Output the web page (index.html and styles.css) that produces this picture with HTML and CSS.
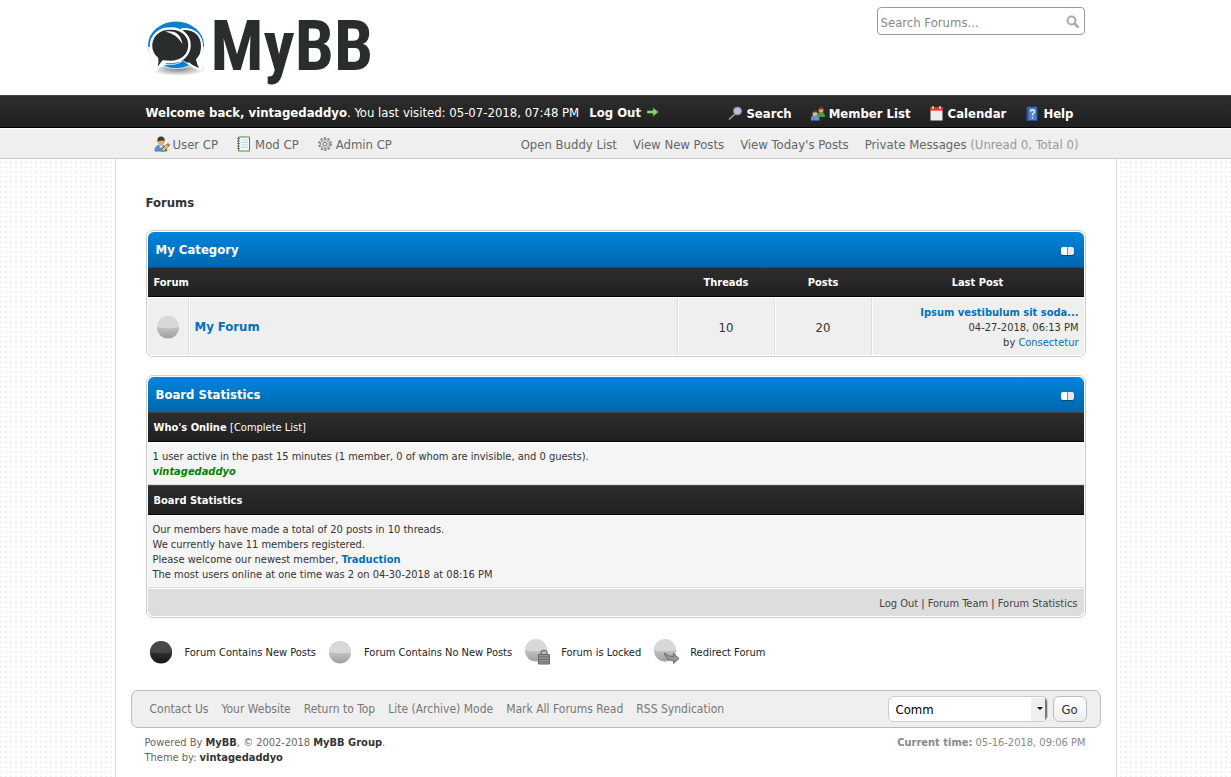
FILE: index.html
```html
<!DOCTYPE html>
<html lang="en">
<head>
<meta charset="utf-8">
<title>Forums</title>
<link rel="stylesheet" href="styles.css">
</head>
<body>
<svg width="0" height="0" class="defs" aria-hidden="true">
  <defs>
    <linearGradient id="gLight" x1="0" y1="0" x2="0" y2="1"><stop offset="0.4" stop-color="#c8c8c8"/><stop offset="1" stop-color="#a0a0a0"/></linearGradient>
    <linearGradient id="gDark" x1="0" y1="0" x2="0" y2="1"><stop offset="0.4" stop-color="#333"/><stop offset="1" stop-color="#161616"/></linearGradient>
    <symbol id="ballOff" viewBox="0 0 22 23"><circle cx="11" cy="11.5" r="11" fill="url(#gLight)"/><path d="M0 11A11 11 0 0 1 22 11Q11 13.500 0 11Z" fill="#d8d8d8"/></symbol>
    <symbol id="ballOn" viewBox="0 0 22 23"><circle cx="11" cy="11.5" r="11" fill="url(#gDark)"/><path d="M0 11A11 11 0 0 1 22 11Q11 13.500 0 11Z" fill="#484848"/></symbol>
  </defs>
</svg>
<header class="top">
  <div class="wrap top-row">
    <a class="logo" href="#" aria-label="MyBB">
      <svg class="logo-mark" width="60" height="60" viewBox="0 0 60 60" aria-hidden="true">
        <defs><radialGradient id="gSh"><stop offset="0" stop-color="#000" stop-opacity=".5"/><stop offset="1" stop-color="#000" stop-opacity="0"/></radialGradient></defs>
        <ellipse cx="30" cy="49" rx="28" ry="7" fill="url(#gSh)"/>
        <ellipse cx="28" cy="25" rx="28" ry="23.500" fill="#0b7fd0"/>
        <path d="M0 27Q1 36 8 42L4 51L16 46L20 40L10 28ZM56 27Q55 36 49 40L54 50L44 46L40 38L50 26Z" fill="#fff"/>
        <path d="M34 9C47 8 54 16 54 26C54 33 52 37 49 39.500Q50 45 53 49.500Q46 48 41 43.500L32 44Z" fill="#2a2d2d" stroke="#fff" stroke-width="2" stroke-linejoin="round"/>
        <path d="M22 8.500C34 8 41.500 16 41.500 25C41.500 35 34 42 22 42Q19 42 15 41.500Q12 47 6 51Q10 45 9 38.500C5 35 3 31 3 26C3 15.500 11 8.500 22 8.500Z" fill="#2a2d2d" stroke="#fff" stroke-width="2.500" stroke-linejoin="round"/>
        <path d="M17 44.500Q29 45.500 35 40.500L42 45.500Q28 51.500 17 46.500Z" fill="#0b7fd0" stroke="#fff" stroke-width=".8"/>
        <path d="M17 11.500Q32 9 34.500 24Q29 14 17 11.500Z" fill="#fff"/>
      </svg>
      <span class="logo-text">MyBB</span>
    </a>
    <form class="search">
      <input type="text" aria-label="Search Forums" placeholder="Search Forums...">
      <button type="button" aria-label="Search"><svg width="14" height="14" viewBox="0 0 14 14"><circle cx="5.500" cy="5.500" r="4" fill="none" stroke="#aaa" stroke-width="2"/><path d="M8.500 8.500L12.500 12.500" stroke="#aaa" stroke-width="2.500"/></svg></button>
    </form>
  </div>
</header>
<div class="upper">
  <div class="wrap upper-row">
    <div class="welcome"><span><strong>Welcome back, <a href="#">vintagedaddyo</a></strong>. You last visited: 05-07-2018, 07:48 PM</span>
      <a class="logout" href="#">Log Out <svg width="14" height="10" viewBox="-2 0 14 10"><path d="M0 3.500H6V0.500L11.500 5L6 9.500V6.500H0Z" fill="#8fcf7a" stroke="#2c6b23" stroke-width=".8"/></svg></a></div>
    <nav class="main-nav">
      <a href="#"><svg width="16" height="16" viewBox="0 0 16 16"><path d="M2 13.500L8 8" stroke="#aaa" stroke-width="1.500"/><circle cx="10.500" cy="5" r="4" fill="#b4c2d6" stroke="#7d8794"/></svg>Search</a>
      <a href="#"><svg width="16" height="16" viewBox="0 0 16 16"><path d="M7 11Q7 6 11 6Q15 6 15 11Z" fill="#4a9d3f"/><circle cx="11" cy="4" r="2.500" fill="#e0ad79"/><path d="M8.500 4Q8 1 11 1Q14 1 13.500 4Q12 2.500 8.500 4Z" fill="#80381e"/><path d="M1 14.500Q0 9 5 9Q10 9 9.500 14.500Z" fill="#5d94dd"/><circle cx="5" cy="7.500" r="2.500" fill="#e7b67c"/><path d="M2.500 7Q2 4 5 4Q8 4 7.500 7Q6 5.500 2.500 7Z" fill="#593b20"/></svg>Member List</a>
      <a href="#"><svg width="16" height="16" viewBox="0 0 16 16"><path d="M1.500 5H13.500V14.500H1.500Z" fill="#e9eeed"/><path d="M1 1H14V5H1Z" fill="#dc3434"/><path d="M4 0V3M11 0V3" stroke="#fff" stroke-width="1.200"/><path d="M2 4.500H13" stroke="#ef8080"/></svg>Calendar</a>
      <a href="#"><svg width="16" height="16" viewBox="0 0 16 16"><path d="M3 1H13V14.500H3Z" fill="#4d82cf" stroke="#264f91"/><path d="M4 2V14" stroke="#244c8c"/><path d="M6.500 5.500Q6.500 4 8.500 4Q10.700 4 10.500 6Q10.300 7.300 8.500 8V9.500M8.500 11V12.500" fill="none" stroke="#fff" stroke-width="1.300"/></svg>Help</a>
    </nav>
  </div>
</div>
<div class="lower">
  <div class="wrap lower-row">
    <nav class="cp-nav">
      <a href="#"><svg width="16" height="16" viewBox="0 0 16 16"><path d="M1 15Q1 9 7 9Q12 9 13 15Z" fill="#5d95d8" stroke="#34659c" stroke-width=".8"/><path d="M5 9.500L7 12L9 9.500" fill="#fff"/><circle cx="7" cy="5.500" r="3.500" fill="#e3ae78"/><path d="M3.300 5.500Q3 .5 7 .5Q11 .5 10.700 5.500Q9.500 3.500 3.300 5.500Z" fill="#4e3928"/><path d="M8 15L14.500 8.500" stroke="#5e5221" stroke-width="3"/><path d="M8.500 14.500L14.500 8.500" stroke="#f3d84d" stroke-width="2"/><path d="M13.500 9.500L15 8" stroke="#dd5757" stroke-width="2.500"/></svg>User CP</a>
      <a href="#"><svg width="16" height="16" viewBox="0 0 16 16"><path d="M2.500 1H13.500V15H2.500Z" fill="#f6faff" stroke="#4b8a3d"/><path d="M5 4H12M5 6.500H12M5 9H12M5 11.500H12" stroke="#b9d1f0"/><path d="M1 2.500H4M1 5H4M1 7.500H4M1 10H4M1 12.500H4" stroke="#777"/></svg>Mod CP</a>
      <a href="#"><svg width="16" height="16" viewBox="0 0 16 16"><circle cx="8" cy="8" r="6" fill="none" stroke="#8a8a8a" stroke-width="1.800" stroke-dasharray="2.350 1.420"/><circle cx="8" cy="8" r="4.700" fill="#ddd" stroke="#999"/><path d="M8 3.500V12.500M3.500 8H12.500M5 5L11 11M11 5L5 11" stroke="#aaa" stroke-width=".8"/><circle cx="8" cy="8" r="1.700" fill="#eee" stroke="#888"/></svg>Admin CP</a>
    </nav>
    <nav class="user-nav">
      <a href="#">Open Buddy List</a><a href="#">View New Posts</a><a href="#">View Today's Posts</a><span><a href="#">Private Messages</a> (Unread 0, Total 0)</span>
    </nav>
  </div>
</div>
<div class="container">
  <main class="content">
    <h1>Forums</h1>
    <section class="box">
      <div class="thead"><h2><a href="#">My Category</a></h2><button class="fold" type="button" aria-label="Collapse My Category"></button></div>
      <table class="forums">
        <colgroup><col class="col-status"><col><col class="col-num"><col class="col-num"><col class="col-last"></colgroup>
        <thead><tr><th colspan="2" class="left">Forum</th><th>Threads</th><th>Posts</th><th>Last Post</th></tr></thead>
        <tbody><tr>
          <td class="status"><svg width="22" height="23"><use href="#ballOff"/></svg></td>
          <td><a class="forum-name" href="#">My Forum</a></td>
          <td class="num">10</td><td class="num">20</td>
          <td class="last"><a href="#"><strong>Ipsum vestibulum sit soda...</strong></a><br>04-27-2018, 06:13 PM<br>by <a href="#">Consectetur</a></td>
        </tr></tbody>
      </table>
    </section>
    <section class="box">
      <div class="thead"><h2>Board Statistics</h2><button class="fold" type="button" aria-label="Collapse Board Statistics"></button></div>
      <h3 class="tcat">Who's Online <span>[<a href="#">Complete List</a>]</span></h3>
      <div class="row">1 user active in the past 15 minutes (1 member, 0 of whom are invisible, and 0 guests).<br><a class="admin" href="#">vintagedaddyo</a></div>
      <h3 class="tcat">Board Statistics</h3>
      <div class="row">Our members have made a total of 20 posts in 10 threads.<br>We currently have 11 members registered.<br>Please welcome our newest member, <a href="#"><strong>Traduction</strong></a><br>The most users online at one time was 2 on 04-30-2018 at 08:16 PM</div>
      <div class="tfoot"><a href="#">Log Out</a> | <a href="#">Forum Team</a> | <a href="#">Forum Statistics</a></div>
    </section>
    <ul class="legend">
      <li><svg width="22" height="23"><use href="#ballOn"/></svg>Forum Contains New Posts</li>
      <li><svg width="22" height="23"><use href="#ballOff"/></svg>Forum Contains No New Posts</li>
      <li class="wide"><svg width="26" height="26" viewBox="0 0 26 26"><use href="#ballOff" width="22" height="23"/><path d="M16 15V13.500Q16 11.500 19 11.500Q22 11.500 22 13.500V15" fill="none" stroke="#777" stroke-width="1.500"/><path d="M13.500 15.500H24.500V25H13.500Z" fill="#999" stroke="#666"/><path d="M14 18H24M14 20.500H24M14 23H24" stroke="#666"/></svg>Forum is Locked</li>
      <li class="wide"><svg width="26" height="26" viewBox="0 0 26 26"><use href="#ballOff" width="22" height="23"/><path d="M10.500 14Q14 18 19.500 17.500V14.500L25 19.500L19.500 24.500V21.500Q12 22 10.500 14Z" fill="#999" stroke="#666"/></svg>Redirect Forum</li>
    </ul>
  </main>
  <footer>
    <div class="foot-bar">
      <nav><a href="#">Contact Us</a><a href="#">Your Website</a><a href="#">Return to Top</a><a href="#">Lite (Archive) Mode</a><a href="#">Mark All Forums Read</a><a href="#">RSS Syndication</a></nav>
      <form class="theme">
        <div class="pick"><select aria-label="Theme"><option>Comm</option></select></div>
        <button type="button">Go</button>
      </form>
    </div>
    <div class="copy">
      <div>Powered By <a href="#">MyBB</a>, © 2002-2018 <a href="#">MyBB Group</a>.<br>Theme by: <a href="#">vintagedaddyo</a></div>
      <div class="time"><strong>Current time:</strong> 05-16-2018, 09:06 PM</div>
    </div>
  </footer>
</div>
</body>
</html>
```
FILE: styles.css
```css
* { box-sizing: border-box; }
html { height: 100%; }
body {
  margin: 0;
  min-height: 100%;
  display: flex;
  flex-direction: column;
  font: 11px/15px Tahoma, "DejaVu Sans Condensed", "Noto Sans", sans-serif;
  color: #333;
  background: #fff conic-gradient(from 90deg at 3px 2px, #fff 270deg, #efefef 0) 2px 1px / 5px 5px;
}
a { color: #0072bc; text-decoration: none; }
input, button, select { font: inherit; }
.defs { position: absolute; }
.wrap { max-width: 940px; margin: 0 auto; }

.top { background: #fff; }
.top-row { display: flex; justify-content: space-between; align-items: flex-start; height: 95px; }
.logo { display: flex; align-items: flex-start; color: #2a2d2d; }
.logo-mark { margin: 20px 3px 0 2px; }
.logo-text { font: bold 70px/92px "Liberation Sans Narrow", "Roboto Condensed", "Open Sans Condensed", sans-serif; }
.search {
  display: flex;
  align-items: center;
  width: 208px;
  height: 28px;
  margin: 7px 1px 0 0;
  padding: 2px 4px 0 3px;
  border: 1px solid #999;
  border-radius: 4px;
  background: #fff;
}
.search input { flex: 1; min-width: 0; border: 0; padding: 0; outline: 0; background: none; font-size: 13px; }
.search input::placeholder { color: #888; }
.search button { display: flex; padding: 0; border: 0; background: none; }

.upper, .tcat, .forums thead tr {
  background: linear-gradient(#2d2d2d, #202020);
  color: #fff;
}
.upper { border-top: 1px solid #384640; border-bottom: 1px solid #000; font-size: 13px; }
.upper a { color: #fff; font-weight: bold; }
.upper-row { display: flex; justify-content: space-between; align-items: center; height: 31px; }
.welcome { display: flex; gap: 10px; padding-top: 2px; white-space: nowrap; }
.main-nav { display: flex; gap: 18px; padding: 4px 12px 0 0; }
.main-nav a, .cp-nav a { display: flex; align-items: center; gap: 3px; }

.lower { background: #efefef; border-bottom: 1px solid #ccc; border-top: 1px solid #fff; font-size: 13px; color: #999; }
.lower a { color: #666; }
.lower-row { display: flex; justify-content: space-between; align-items: center; height: 29px; padding: 1px 7px 0 8px; white-space: nowrap; }
.cp-nav { display: flex; gap: 18px; }
.user-nav { display: flex; gap: 16px; }

.container {
  flex: 1;
  width: 100%;
  max-width: 1002px;
  margin: 0 auto;
  padding: 35px 15px 0;
  border: solid #ddd;
  border-width: 0 1px;
  background: #fff;
}
.content { padding: 0 15px; }
h1 { margin: 0 0 18px; font-size: 13px; line-height: 18px; }
.box { margin-bottom: 18px; padding: 1px; border: 1px solid #ccc; border-radius: 7px; }
.thead {
  display: flex;
  justify-content: space-between;
  align-items: center;
  height: 35px;
  padding: 0 10px 0 8px;
  border-radius: 6px 6px 0 0;
  background: linear-gradient(#0085dc, #0066ad);
}
.thead h2 { margin: 0; font-size: 13px; color: #fff; }
.thead a { color: #fff; }
.fold {
  width: 13px;
  height: 8px;
  margin-top: 2px;
  padding: 0;
  border: 0;
  border-radius: 2px;
  background: linear-gradient(90deg, #fff 6px, #888 6px, #888 7px, #e8e8e8 7px);
  box-shadow: 0 1px 1px #046;
}
.forums { width: 100%; border-collapse: separate; border-spacing: 0; table-layout: fixed; }
.col-status { width: 41px; }
.col-num { width: 97px; }
.col-last { width: 212px; }
.forums th { height: 30px; padding: 1px 6px 0; border-top: 1px solid #384640; border-bottom: 1px solid #000; }
.forums .left { text-align: left; }
.forums td { height: 58px; padding: 1px 5px 0 6px; border: 1px solid #fff; border-width: 1px 1px 0 0; border-right-color: #ddd; background: #efefef; box-shadow: inset 1px 0 #fff; }
.forums td:last-child { border-right: 0; border-bottom-right-radius: 6px; }
.forums td:first-child { border-bottom-left-radius: 6px; box-shadow: none; }
.forums td.num { font-size: 13px; text-align: center; }
.forums td.last { text-align: right; }
.forums td.status { padding: 0 5px; }
.status svg { display: block; margin: 2px auto 0; }
.forum-name { font-size: 13px; font-weight: bold; }
.tcat { margin: 0; height: 30px; padding: 0 6px; border-top: 1px solid #444; border-bottom: 1px solid #000; font-size: 11px; line-height: 29px; }
.tcat span { font-weight: normal; }
.tcat a { color: #fff; }
.row { padding: 6px 5px 5px; border-top: 1px solid #fff; border-bottom: 1px solid #ddd; background: #f5f5f5; }
.admin { color: green; font-weight: bold; font-style: italic; }
.tfoot { padding: 7px 6px 5px; border-top: 1px solid #fff; border-radius: 0 0 6px 6px; background: #ddd; text-align: right; }
.tfoot a { color: #444; }

.legend { display: flex; flex-wrap: wrap; gap: 13px; margin: 0; padding: 3px 4px; list-style: none; color: #222; }
.legend li { display: flex; align-items: center; gap: 13px; height: 26px; }
.legend .wide { gap: 10px; }

footer { padding-top: 22px; color: #666; }
.foot-bar {
  display: flex;
  justify-content: space-between;
  align-items: center;
  padding: 5px 13px 5px 18px;
  border: 1px solid #bbb;
  border-radius: 7px;
  background: #efefef;
}
.foot-bar nav { display: flex; flex-wrap: wrap; gap: 13px; font-size: 12px; }
.foot-bar nav a { color: #777; }
.theme { display: flex; gap: 5px; font-size: 13px; }
.pick { position: relative; width: 160px; height: 26px; border: 1px solid #ccc; border-radius: 6px; overflow: hidden; background: #fff; }
.pick::before { content: ""; position: absolute; top: 1px; right: 0; width: 14px; height: 23px; background: #efefef; border-right: 2px solid #777; border-bottom: 2px solid #777; pointer-events: none; }
.pick::after { content: ""; position: absolute; top: 10px; right: 4px; border: 3px solid transparent; border-top-color: #000; pointer-events: none; }
.pick select { width: 100%; height: 100%; padding: 0 20px 0 7px; border: 0; outline: 0; appearance: none; background: none; color: #000; }
.theme button { width: 34px; height: 26px; padding: 0; border: 1px solid #bbb; border-radius: 6px; background: linear-gradient(#fff, #eee); color: #333; }
.copy { display: flex; justify-content: space-between; padding: 7px 15px 0 14px; }
.copy a { color: #333; font-weight: bold; }
.time { color: #888; }
```
